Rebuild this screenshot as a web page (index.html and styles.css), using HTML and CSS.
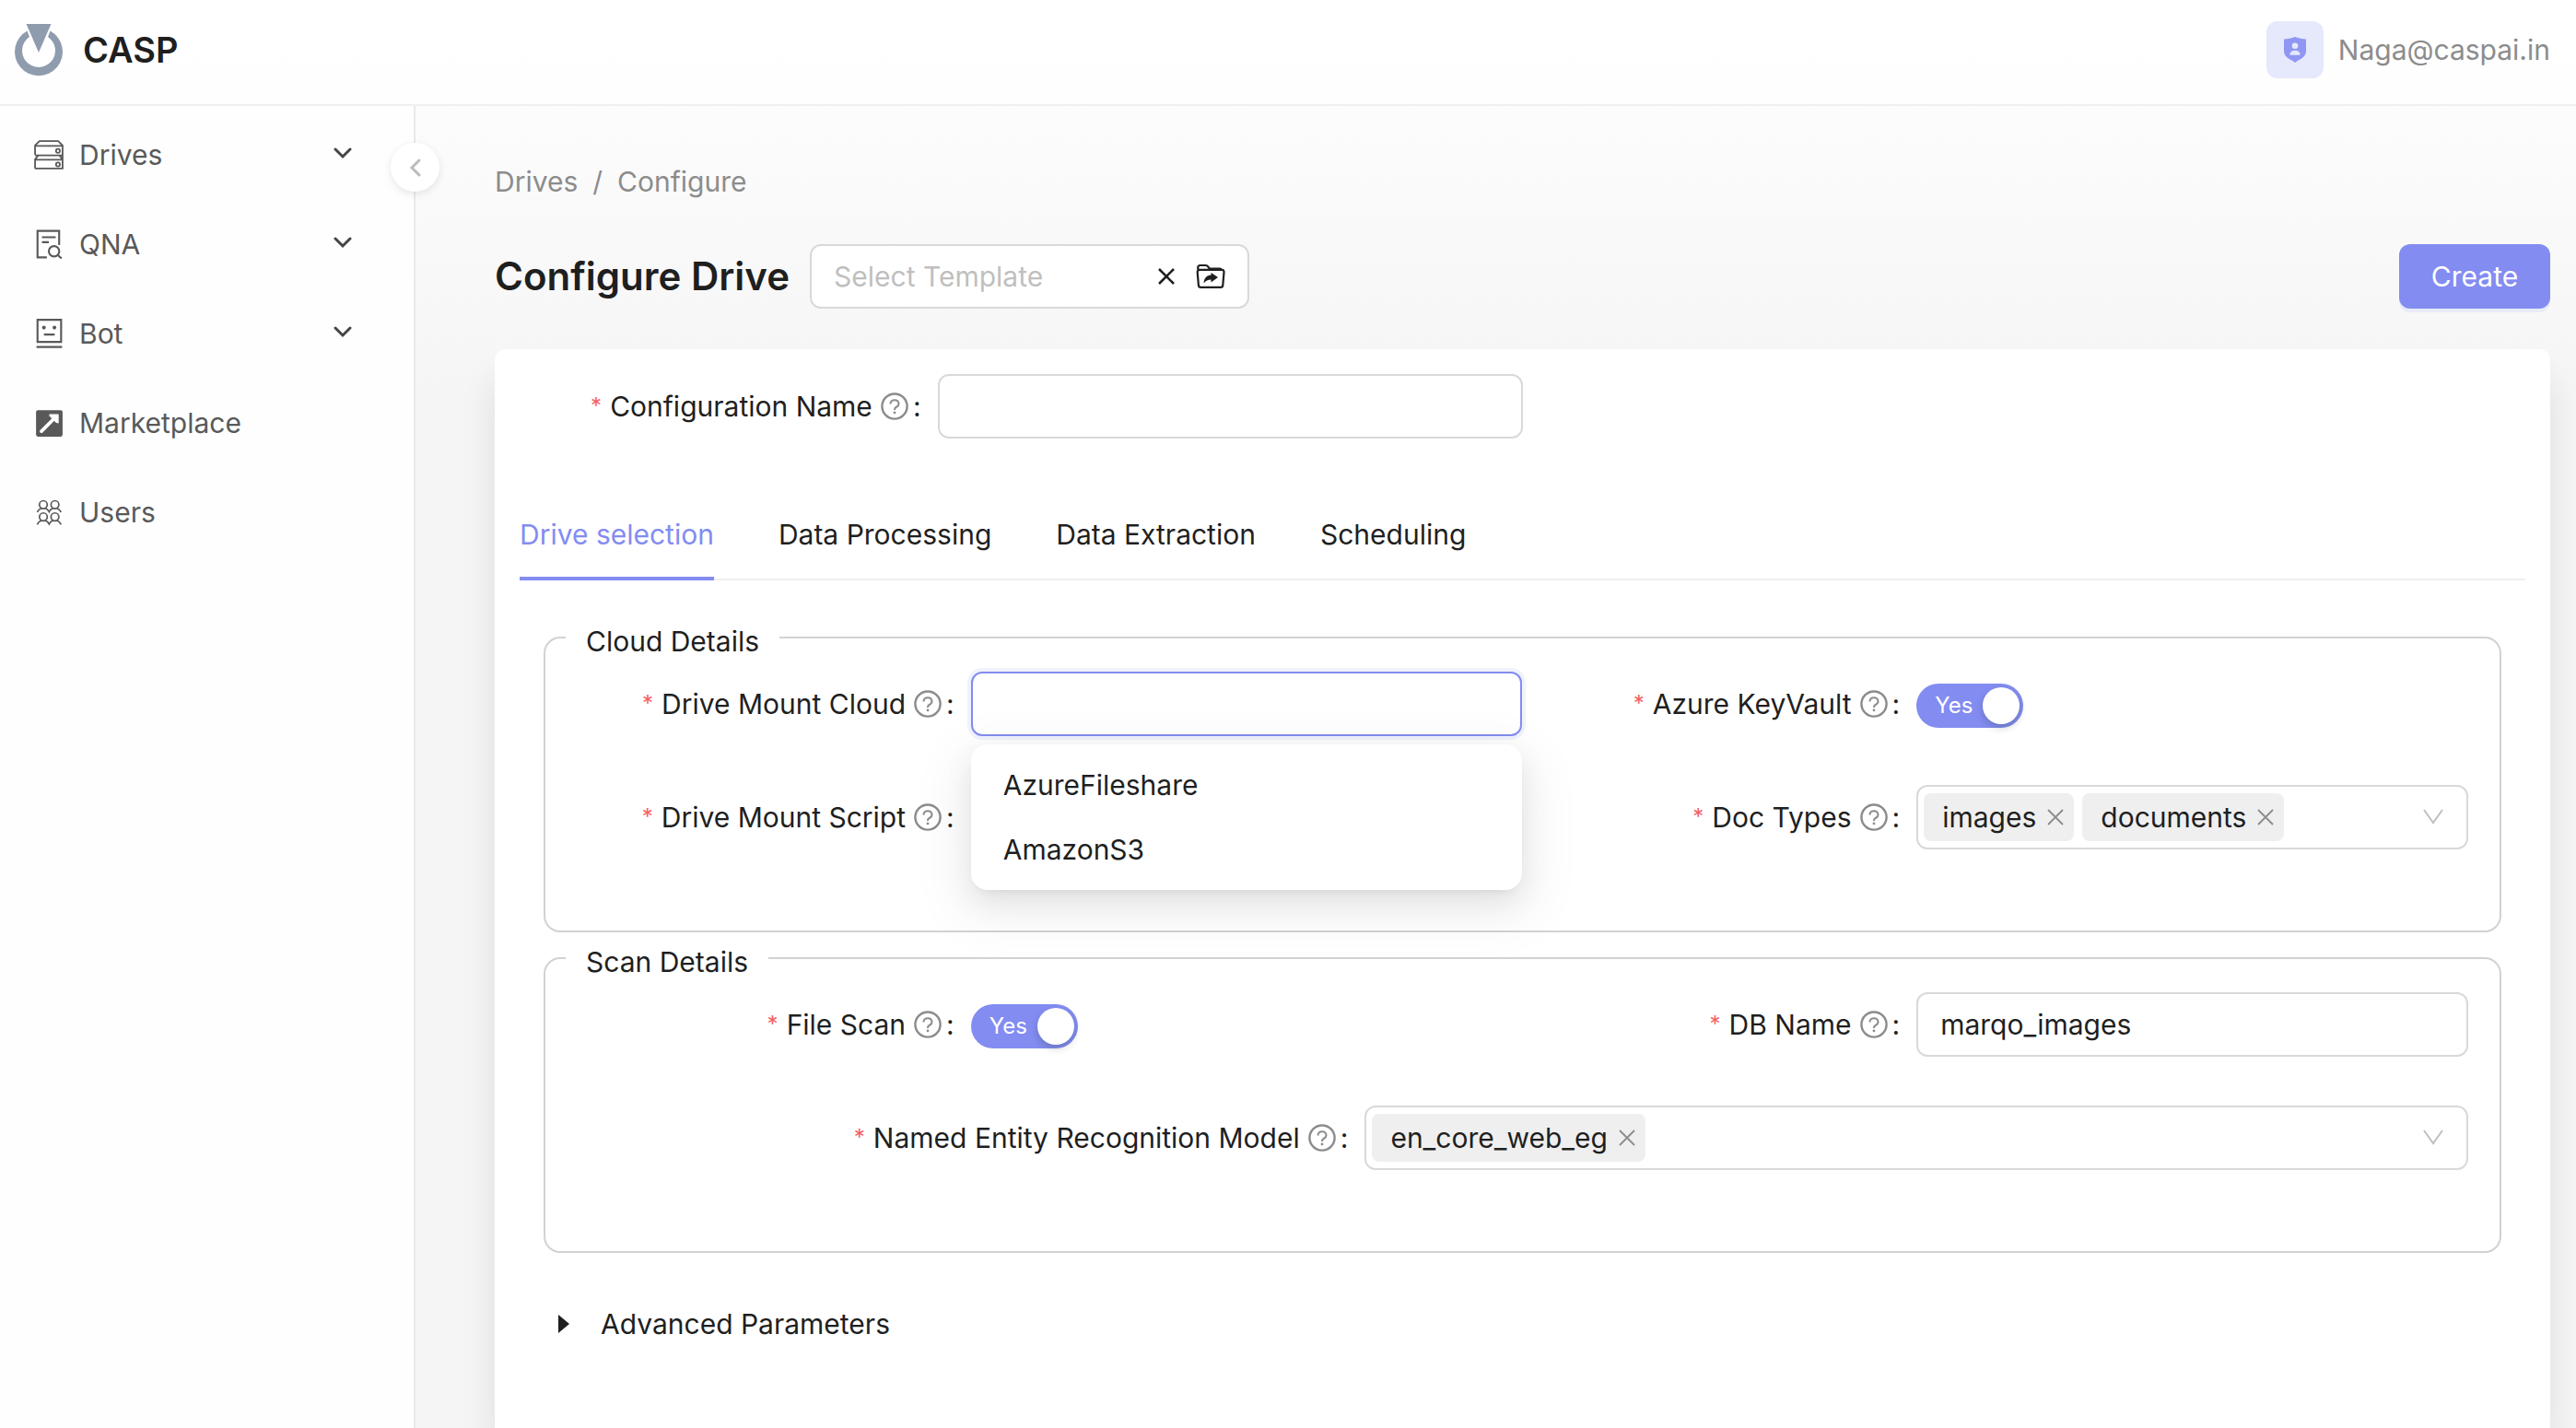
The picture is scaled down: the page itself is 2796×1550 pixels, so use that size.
FILE: index.html
```html
<!DOCTYPE html>
<html lang="en">
<head>
<meta charset="utf-8">
<meta name="viewport" content="width=device-width, initial-scale=1">
<title>Configure Drive - CASP</title>
<link rel="stylesheet" href="styles.css">
</head>
<body>
<svg class="sprite" aria-hidden="true">
  <symbol id="icon-help" viewBox="0 0 32 32">
    <circle cx="16" cy="16" r="14.500" fill="none" stroke="currentColor" stroke-width="2.600"/>
    <path d="M11.200 13.200c0-2.700 2.100-4.500 4.800-4.500s4.800 1.800 4.800 4.300c0 1.900-1.100 3-2.600 3.800-1.500.8-2.200 1.500-2.200 2.900v.6" fill="none" stroke="currentColor" stroke-width="2.200"/>
    <circle cx="16" cy="23.400" r="1.500" fill="currentColor"/>
  </symbol>
  <symbol id="icon-close" viewBox="0 0 20 20">
    <path d="M2 2l16 16M18 2L2 18" fill="none" stroke="currentColor" stroke-width="1.800"/>
  </symbol>
  <symbol id="icon-arrow" viewBox="0 0 24 24">
    <path d="M2 4l10 14L22 4" fill="none" stroke="currentColor" stroke-width="2"/>
  </symbol>
  <symbol id="icon-chevron" viewBox="0 0 20 20">
    <path d="M2 4l8 8 8-8" fill="none" stroke="currentColor" stroke-width="3" stroke-linecap="round"/>
  </symbol>
</svg>

<header class="header">
  <a class="brand" href="#">
    <svg class="logo" viewBox="0 0 52 56" aria-hidden="true">
      <path d="M13.500 7.500A26 26 0 1 0 38.500 7.500L36 14A18 18 0 1 1 16 14Z" fill="#8f9cae"/>
      <path d="M11 -1L26 34L41 -1Z" fill="#fff"/>
      <path d="M12.500 0H39.500L26 31Z" fill="#8f9cae"/>
    </svg>
    CASP
  </a>
  <div class="account">
    <span class="avatar">
      <svg viewBox="0 0 24 28" width="24" height="28" aria-hidden="true">
        <path d="M12 0c4 1.700 8 2.400 12 2.400V15.500c0 3-1.500 5.300-4 7.300C17.500 24.800 14.500 26 12 28 9.500 26 6.500 24.800 4 22.800 1.500 20.800 0 18.500 0 15.500V2.400C4 2.400 8 1.700 12 0Z" fill="#8f97f3"/>
        <circle cx="12" cy="9.700" r="3.300" fill="#e6e8fc"/>
        <path d="M6.300 19.700c.3-3.300 2.300-5 5.700-5s5.400 1.700 5.700 5z" fill="#e6e8fc"/>
      </svg>
    </span>
    <span>Naga@caspai.in</span>
  </div>
</header>

<div class="shell">
  <aside class="sidebar">
    <nav class="menu">
      <a class="menu-item" href="#">
        <svg class="menu-icon" viewBox="0 0 30 30" fill="none" stroke="currentColor" stroke-width="1.700" aria-hidden="true">
          <path d="M1 15V5.500L5.500 1h19L29 5.500V15.500H1M1 6h28M1 29V19.500L4 16M29 15.500V29H1M1 20h28M26 16l3 4"/>
          <circle cx="24.300" cy="11" r="2"/><circle cx="24.300" cy="24.800" r="2"/>
        </svg>
        <span>Drives</span>
        <svg class="menu-arrow" aria-hidden="true"><use href="#icon-chevron"/></svg>
      </a>
      <a class="menu-item" href="#">
        <svg class="menu-icon" viewBox="0 0 30 30" fill="none" stroke="currentColor" stroke-width="2" aria-hidden="true">
          <path d="M13 28.500H3.500V1.500h22V16M8 8h14M8 13h7M24 26l4 3.500"/>
          <circle cx="20.300" cy="22.300" r="5.300"/>
        </svg>
        <span>QNA</span>
        <svg class="menu-arrow" aria-hidden="true"><use href="#icon-chevron"/></svg>
      </a>
      <a class="menu-item" href="#">
        <svg class="menu-icon" viewBox="0 0 30 30" fill="none" stroke="currentColor" stroke-width="2" aria-hidden="true">
          <path d="M3.500 1h24v22.500h-24zM2.500 28.700h26M10 16h11"/>
          <circle cx="10" cy="9" r="1.900" fill="currentColor" stroke="none"/><circle cx="20.700" cy="9" r="1.900" fill="currentColor" stroke="none"/>
        </svg>
        <span>Bot</span>
        <svg class="menu-arrow" aria-hidden="true"><use href="#icon-chevron"/></svg>
      </a>
      <a class="menu-item" href="#">
        <svg class="menu-icon" viewBox="0 0 30 30" aria-hidden="true">
          <rect x="2" y="2" width="27" height="27" rx="2" fill="currentColor"/>
          <path d="M7.500 23.500L20 11" stroke="#fff" stroke-width="3.500" stroke-linecap="round"/>
          <path d="M15.500 6H25v9.500l-2.500-.5-7-7z" fill="#fff"/>
        </svg>
        <span>Marketplace</span>
      </a>
      <a class="menu-item" href="#">
        <svg class="menu-icon" viewBox="0 0 30 30" fill="none" stroke="currentColor" stroke-width="1.600" aria-hidden="true">
          <circle cx="9.400" cy="7.300" r="4"/><circle cx="21.200" cy="7.300" r="4"/>
          <circle cx="9.400" cy="19.700" r="4"/><circle cx="21.200" cy="19.700" r="4"/>
          <path d="M3.200 15c.8-2 2.200-3.200 4-4M11.600 11c1.700.8 3 2 3.700 3.500.7-1.500 2-2.700 3.700-3.500M23.400 11c1.800.8 3.200 2 4 4M3.200 27.500c.8-2 2.200-3.200 4-4M11.600 23.500c1.700.8 3 2 3.700 3.500.7-1.500 2-2.700 3.700-3.500M23.400 23.500c1.800.8 3.200 2 4 4"/>
        </svg>
        <span>Users</span>
      </a>
    </nav>
    <button class="collapse" type="button" aria-label="Collapse menu">
      <svg viewBox="0 0 20 20" width="20" height="20" aria-hidden="true"><path d="M14 2L6 10l8 8" fill="none" stroke="#bcbcbc" stroke-width="3" stroke-linecap="round"/></svg>
    </button>
  </aside>

  <main class="main">
    <nav class="breadcrumb" aria-label="Breadcrumb">
      <a href="#">Drives</a><span>/</span><a href="#">Configure</a>
    </nav>

    <div class="page-head">
      <h1>Configure Drive</h1>
      <div class="template">
        <input type="text" placeholder="Select Template" aria-label="Select Template">
        <button type="button" aria-label="Clear template">
          <svg viewBox="0 0 20 20" width="20" height="20" aria-hidden="true"><path d="M2 2l16 16M18 2L2 18" stroke="currentColor" stroke-width="2.600"/></svg>
        </button>
        <button type="button" aria-label="Load template">
          <svg viewBox="0 0 32 28" width="32" height="28" fill="none" stroke="currentColor" stroke-width="2.200" aria-hidden="true">
            <path d="M2.600 8.500L2.200 4.500A2.300 2.300 0 0 1 4.500 2h6.300c1.200 0 1.700.4 2.300 1.300l1.200 1.500c.5.700 1 .9 1.900.9h9.500c1.400 0 2.300.8 2.500 2.300M4 6.900h24.300a2.200 2.200 0 0 1 2.200 2.400l-1.200 14.300a2.500 2.500 0 0 1-2.500 2.300H5.400a2.500 2.500 0 0 1-2.500-2.300L1.700 9.300A2.200 2.200 0 0 1 4 6.900z"/>
            <path d="M8.500 21.500c.4-5.500 3.200-8.700 8-8.900v-2.700l7.500 5.200-7.500 5.300v-2.800c-3.500 0-5.800 1.200-8 3.900z" fill="currentColor" stroke="none"/>
          </svg>
        </button>
      </div>
      <button class="primary" type="button">Create</button>
    </div>

    <form class="card">
      <div class="field name-field">
        <label class="label" for="config-name"><i>*</i>Configuration Name<svg aria-hidden="true"><use href="#icon-help"/></svg>:</label>
        <input class="control" id="config-name" type="text">
      </div>

      <div class="tabs" role="tablist">
        <button class="tab active" type="button" role="tab" aria-selected="true">Drive selection</button>
        <button class="tab" type="button" role="tab" aria-selected="false">Data Processing</button>
        <button class="tab" type="button" role="tab" aria-selected="false">Data Extraction</button>
        <button class="tab" type="button" role="tab" aria-selected="false">Scheduling</button>
      </div>

      <div class="panel" role="tabpanel">
        <fieldset>
          <legend>Cloud Details</legend>
          <div class="rows">
            <div class="field">
              <label class="label" for="mount-cloud"><i>*</i>Drive Mount Cloud<svg aria-hidden="true"><use href="#icon-help"/></svg>:</label>
              <div class="anchor">
                <input class="control focused" id="mount-cloud" type="text" role="combobox" aria-expanded="true" aria-controls="cloud-list">
                <ul class="dropdown" id="cloud-list" role="listbox">
                  <li role="option">AzureFileshare</li>
                  <li role="option">AmazonS3</li>
                </ul>
              </div>
            </div>
            <div class="field">
              <label class="label" for="keyvault"><i>*</i>Azure KeyVault<svg aria-hidden="true"><use href="#icon-help"/></svg>:</label>
              <span class="switch"><input id="keyvault" type="checkbox" role="switch" checked><span>Yes</span></span>
            </div>
            <div class="field">
              <label class="label" for="mount-script"><i>*</i>Drive Mount Script<svg aria-hidden="true"><use href="#icon-help"/></svg>:</label>
              <input class="control" id="mount-script" type="text">
            </div>
            <div class="field">
              <label class="label" for="doc-types"><i>*</i>Doc Types<svg aria-hidden="true"><use href="#icon-help"/></svg>:</label>
              <div class="control multi">
                <span class="tag">images<button type="button" aria-label="Remove images"><svg aria-hidden="true"><use href="#icon-close"/></svg></button></span>
                <span class="tag">documents<button type="button" aria-label="Remove documents"><svg aria-hidden="true"><use href="#icon-close"/></svg></button></span>
                <input id="doc-types" type="text" role="combobox" aria-expanded="false">
                <svg class="arrow" aria-hidden="true"><use href="#icon-arrow"/></svg>
              </div>
            </div>
          </div>
        </fieldset>

        <fieldset>
          <legend>Scan Details</legend>
          <div class="rows">
            <div class="field">
              <label class="label" for="file-scan"><i>*</i>File Scan<svg aria-hidden="true"><use href="#icon-help"/></svg>:</label>
              <span class="switch"><input id="file-scan" type="checkbox" role="switch" checked><span>Yes</span></span>
            </div>
            <div class="field">
              <label class="label" for="db-name"><i>*</i>DB Name<svg aria-hidden="true"><use href="#icon-help"/></svg>:</label>
              <input class="control" id="db-name" type="text" value="marqo_images">
            </div>
            <div class="field wide">
              <label class="label" for="ner-model"><i>*</i>Named Entity Recognition Model<svg aria-hidden="true"><use href="#icon-help"/></svg>:</label>
              <div class="control multi">
                <span class="tag">en_core_web_eg<button type="button" aria-label="Remove en_core_web_eg"><svg aria-hidden="true"><use href="#icon-close"/></svg></button></span>
                <input id="ner-model" type="text" role="combobox" aria-expanded="false">
                <svg class="arrow" aria-hidden="true"><use href="#icon-arrow"/></svg>
              </div>
            </div>
          </div>
        </fieldset>

        <button class="advanced" type="button" aria-expanded="false">
          <svg viewBox="0 0 12 20" width="12" height="20" aria-hidden="true"><path d="M0 0l12 10L0 20z" fill="currentColor"/></svg>
          Advanced Parameters
        </button>
      </div>
    </form>
  </main>
</div>
</body>
</html>
```

FILE: styles.css
```css
:root {
  --primary: #838cf1;
  --text: #1f1f1f;
  --muted: #8c8c8c;
  --border: #d9d9d9;
  --line: #efefef;
}

* {
  box-sizing: border-box;
}

body {
  margin: 0;
  min-height: 100vh;
  display: flex;
  flex-direction: column;
  background: linear-gradient(#fff, #f5f5f5 28%) #f5f5f5;
  color: var(--text);
  font: 30px/48px Inter, "Liberation Sans", sans-serif;
}

button,
input {
  font: inherit;
  color: inherit;
}

button {
  padding: 0;
  border: 0;
  background: none;
  cursor: pointer;
}

a {
  color: inherit;
  text-decoration: none;
}

.sprite {
  display: none;
}

/* Header */
.header {
  display: flex;
  align-items: center;
  justify-content: space-between;
  height: 115px;
  padding: 0 28px 6px 16px;
  border-bottom: 2px solid var(--line);
  background: rgba(255, 255, 255, 0.6);
}

.brand {
  display: flex;
  align-items: center;
  gap: 22px;
  font-size: 38px;
  font-weight: 600;
}

.logo {
  width: 52px;
  height: 56px;
  overflow: visible;
}

.account {
  display: flex;
  align-items: center;
  gap: 16px;
  color: var(--muted);
}

.avatar {
  display: grid;
  place-items: center;
  width: 62px;
  height: 62px;
  border-radius: 12px;
  background: #e6e8fc;
}

/* Shell */
.shell {
  flex: 1;
  display: flex;
}

.sidebar {
  position: relative;
  z-index: 1;
  flex: none;
  width: 451px;
  border-right: 2px solid #e9e9e9;
  background: #fefefe;
}

.menu {
  display: flex;
  flex-direction: column;
  gap: 9px;
  padding: 9px;
}

.menu-item {
  display: flex;
  align-items: center;
  height: 88px;
  padding: 0 58px 0 28px;
  color: #595959;
}

.menu-icon {
  width: 32px;
  height: 32px;
  margin-right: 17px;
}

.menu-arrow {
  width: 20px;
  height: 20px;
  margin-left: auto;
  color: #444;
}

.collapse {
  position: absolute;
  top: 40px;
  right: -28px;
  display: grid;
  place-items: center;
  width: 53px;
  height: 53px;
  border-radius: 50%;
  background: #fff;
  box-shadow: 0 4px 16px -4px rgba(0, 0, 0, 0.08), 0 2px 8px rgba(0, 0, 0, 0.06);
}

.main {
  flex: 1;
  min-width: 0;
  display: flex;
  flex-direction: column;
  padding: 58px 28px 0 86px;
}

.breadcrumb {
  display: flex;
  gap: 16px;
  color: var(--muted);
}

.page-head {
  display: flex;
  align-items: center;
  margin: 44px 0;
}

h1 {
  margin: 0 22px 0 0;
  font-size: 42px;
  font-weight: 600;
}

.template {
  display: flex;
  align-items: center;
  gap: 22px;
  width: 477px;
  height: 70px;
  padding: 0 24px;
  border: 2px solid var(--border);
  border-radius: 12px;
  background: #fff;
}

.template input {
  flex: 1;
  min-width: 0;
  padding: 0;
  border: 0;
  outline: 0;
  background: none;
}

.template input::placeholder {
  color: #bfbfbf;
}

.template button,
.tag button {
  display: flex;
}

.primary {
  width: 164px;
  height: 70px;
  margin-left: auto;
  border-radius: 12px;
  background: var(--primary);
  box-shadow: 0 4px 0 #e8ebf8;
  color: #fff;
}

/* Form */
.card {
  flex: 1;
  padding: 27px 27px 56px;
  border-radius: 12px 12px 0 0;
  background: #fff;
  box-shadow: 0 32px 40px rgba(0, 0, 0, 0.08), 0 18px 56px rgba(0, 0, 0, 0.02);
}

.field {
  display: grid;
  grid-template-columns: 5fr 7fr;
  align-items: center;
  min-height: 70px;
}

.name-field {
  width: 50%;
}

.wide {
  grid-column: 1 / -1;
}

.label {
  display: flex;
  align-items: center;
  justify-content: flex-end;
  padding-right: 18px;
  white-space: nowrap;
}

.label i {
  margin-right: 9px;
  color: #f5605f;
  font-size: 24px;
  font-style: normal;
}

.label svg {
  width: 30px;
  height: 30px;
  margin: 0 5px 0 9px;
  color: var(--muted);
}

.control {
  width: 100%;
  height: 70px;
  padding: 0 24px;
  border: 2px solid var(--border);
  border-radius: 12px;
  outline: 0;
  background: #fff;
}

.focused {
  border-color: var(--primary);
  box-shadow: 0 0 0 4px #f0f3fe;
}

.tabs {
  display: flex;
  gap: 70px;
  height: 104px;
  margin-top: 50px;
  border-bottom: 2px solid var(--line);
}

.tab {
  height: 104px;
  padding-top: 8px;
  border-bottom: 4px solid transparent;
}

.tab.active {
  border-color: var(--primary);
  color: var(--primary);
}

.panel {
  padding: 34px 26px 0;
}

fieldset {
  min-width: 0;
  margin: 0;
  padding: 9px 34px 88px;
  border: 2px solid #d2d2d2;
  border-radius: 18px;
}

legend {
  margin-left: -12px;
  padding: 8px 22px 0;
}

.rows {
  display: grid;
  grid-template-columns: 1fr 1fr;
  row-gap: 53px;
}

.anchor {
  position: relative;
  display: flex;
}

.dropdown {
  position: absolute;
  z-index: 2;
  top: 79px;
  left: 0;
  width: 100%;
  margin: 0;
  padding: 9px;
  border-radius: 18px;
  background: #fff;
  box-shadow: 0 12px 32px rgba(0, 0, 0, 0.08), 0 6px 12px -8px rgba(0, 0, 0, 0.12), 0 18px 56px 16px rgba(0, 0, 0, 0.05);
  list-style: none;
}

.dropdown li {
  padding: 11px 26px;
}

.switch {
  position: relative;
  display: flex;
  align-items: center;
  justify-self: start;
  width: 116px;
  height: 48px;
  margin-top: 3px;
  color: #fff;
  font-size: 24px;
}

.switch input {
  position: absolute;
  inset: 0;
  width: 100%;
  height: 100%;
  margin: 0;
  border-radius: 24px;
  appearance: none;
  background: var(--primary);
}

.switch span {
  position: relative;
  padding-left: 20px;
  pointer-events: none;
}

.switch::after {
  content: "";
  position: absolute;
  top: 4px;
  right: 4px;
  width: 40px;
  height: 40px;
  border-radius: 50%;
  background: #fff;
  box-shadow: 0 4px 8px rgba(0, 35, 11, 0.2);
  pointer-events: none;
}

.multi {
  display: flex;
  align-items: center;
  gap: 9px;
  padding: 0 24px 0 6px;
}

.multi input {
  flex: 1;
  width: 0;
  min-width: 0;
  padding: 0;
  border: 0;
  outline: 0;
  background: none;
}

.tag {
  display: flex;
  align-items: center;
  gap: 11px;
  height: 52px;
  padding: 0 10px 0 20px;
  border-radius: 8px;
  background: #efefef;
}

.tag svg {
  width: 20px;
  height: 20px;
  color: var(--muted);
}

.arrow {
  width: 24px;
  height: 24px;
  color: #bfbfbf;
}

.advanced {
  display: flex;
  align-items: center;
  gap: 34px;
  margin-top: 53px;
  padding-left: 16px;
}
```
